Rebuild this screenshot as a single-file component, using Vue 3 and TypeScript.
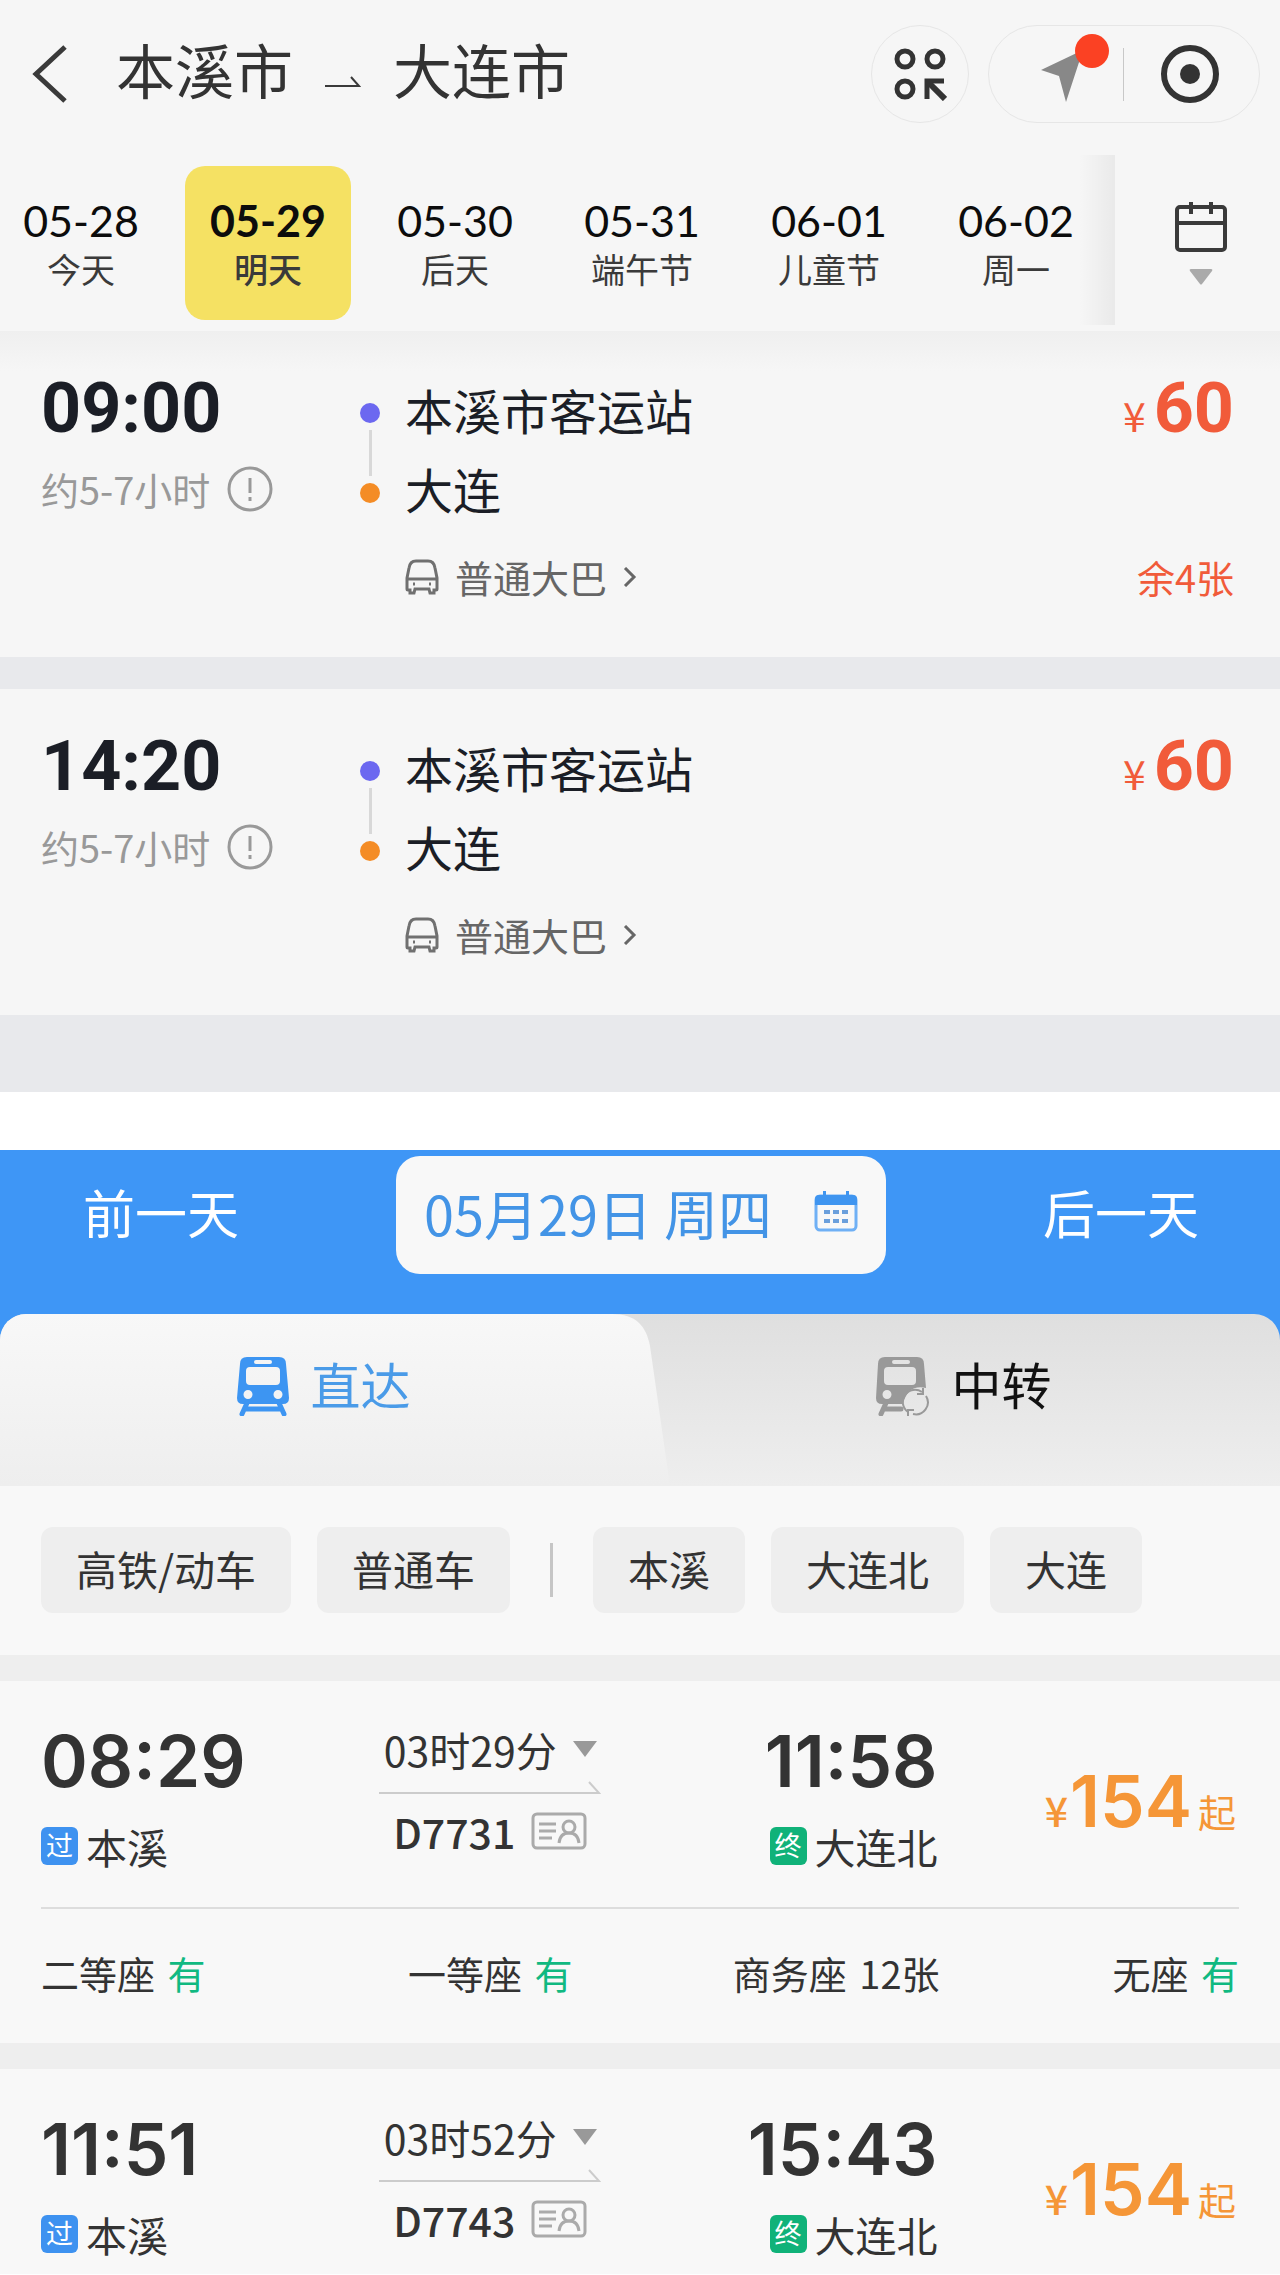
<script setup lang="ts">
import { ref } from 'vue'

interface DateTab { date: string; label: string }
interface Coach { time: string; duration: string; from: string; to: string; type: string; price: number; left?: string }
interface Seat { name: string; stock: string; plenty: boolean }
interface Train { depart: string; arrive: string; from: string; to: string; duration: string; no: string; price: number; seats: Seat[] }

const dates: DateTab[] = [
  { date: '05-28', label: '今天' },
  { date: '05-29', label: '明天' },
  { date: '05-30', label: '后天' },
  { date: '05-31', label: '端午节' },
  { date: '06-01', label: '儿童节' },
  { date: '06-02', label: '周一' },
]
const activeDate = ref('05-29')

const coaches: Coach[] = [
  { time: '09:00', duration: '约5-7小时', from: '本溪市客运站', to: '大连', type: '普通大巴', price: 60, left: '余4张' },
  { time: '14:20', duration: '约5-7小时', from: '本溪市客运站', to: '大连', type: '普通大巴', price: 60 },
]

const typeFilters = ['高铁/动车', '普通车']
const stationFilters = ['本溪', '大连北', '大连']

const trains: Train[] = [
  {
    depart: '08:29', arrive: '11:58', from: '本溪', to: '大连北', duration: '03时29分', no: 'D7731', price: 154,
    seats: [
      { name: '二等座', stock: '有', plenty: true },
      { name: '一等座', stock: '有', plenty: true },
      { name: '商务座', stock: '12张', plenty: false },
      { name: '无座', stock: '有', plenty: true },
    ],
  },
  { depart: '11:51', arrive: '15:43', from: '本溪', to: '大连北', duration: '03时52分', no: 'D7743', price: 154, seats: [] },
]
</script>

<template>
  <div class="page">
    <section class="coach">
      <header class="topbar">
        <button class="back" aria-label="返回">
          <svg width="36" height="60" viewBox="0 0 36 60" fill="none" stroke="#3a3a3a" stroke-width="5"><path d="M33 3 4 30l29 27" /></svg>
        </button>
        <h1 class="route">
          <span>本溪市</span>
          <svg width="36" height="12" viewBox="0 0 36 12" fill="none" stroke="#3a3a3a" stroke-width="2"><path d="M0 10h34L26 1" /></svg>
          <span>大连市</span>
        </h1>
        <button class="round" aria-label="更多服务">
          <svg width="54" height="54" viewBox="0 0 54 54" fill="none" stroke="#333" stroke-width="5">
            <circle cx="12" cy="12" r="8" /><circle cx="42" cy="12" r="8" /><circle cx="12" cy="42" r="8" />
            <path d="M34 52V34h17" /><path d="m36 36 16 16" stroke-width="6" />
          </svg>
        </button>
        <div class="capsule">
          <button class="locate" aria-label="定位">
            <svg width="72" height="72" viewBox="0 0 72 72">
              <path d="M4 37 46 17 29 69 22 43Z" fill="#888" />
              <circle cx="55" cy="18" r="17" fill="#fb4123" />
            </svg>
          </button>
          <i class="bar"></i>
          <button class="close" aria-label="关闭">
            <svg width="60" height="60" viewBox="0 0 60 60"><circle cx="30" cy="30" r="26" fill="none" stroke="#333" stroke-width="6" /><circle cx="30" cy="30" r="10" fill="#333" /></svg>
          </button>
        </div>
      </header>

      <nav class="dates">
        <div class="strip">
          <button v-for="d in dates" :key="d.date" class="day" :class="{ active: d.date === activeDate }" @click="activeDate = d.date">
            <span class="day-date">{{ d.date }}</span>
            <span class="day-label">{{ d.label }}</span>
          </button>
        </div>
        <button class="picker" aria-label="选择日期">
          <svg width="54" height="52" viewBox="0 0 54 52" fill="none" stroke="#3a3a3a" stroke-width="4">
            <rect x="3" y="6" width="48" height="43" rx="3" /><path d="M3 22h48M17 1v12M37 1v12" />
          </svg>
          <svg width="24" height="16" viewBox="0 0 24 16"><path d="M2 0h20q2 0 1 2L13 15q-1 1-2 0L1 2Q0 0 2 0Z" fill="#aaa" /></svg>
        </button>
      </nav>

      <ul class="coach-list">
        <li v-for="c in coaches" :key="c.time" class="coach-row">
          <div class="when">
            <time class="coach-time">{{ c.time }}</time>
            <p class="duration">
              {{ c.duration }}
              <svg width="46" height="46" viewBox="0 0 46 46" fill="none" stroke="#999" stroke-width="3"><circle cx="23" cy="23" r="21" /><path d="M23 12v15M23 31v4" /></svg>
            </p>
          </div>
          <div class="rail"><i class="dot"></i><i class="line"></i><i class="dot end"></i></div>
          <div class="stops">
            <p class="stop">{{ c.from }}</p>
            <p class="stop">{{ c.to }}</p>
            <a class="vehicle" href="#">
              <svg width="34" height="36" viewBox="0 0 34 36" fill="none" stroke="#707070" stroke-width="3">
                <path d="M2 19 4 9Q5 2 11 2h12q6 0 7 7l2 10v11q0 1-1 1h-2v3h-4l-1-4H10l-1 4H5v-3H3q-1 0-1-1ZM2 20h30" />
                <path d="M8 25h2M24 25h2" />
              </svg>
              <span>{{ c.type }}</span>
              <svg width="14" height="20" viewBox="0 0 14 20" fill="none" stroke="#666" stroke-width="3"><path d="m2 1 9 9-9 9" /></svg>
            </a>
          </div>
          <div class="fare">
            <p class="coach-price"><small>¥</small>{{ c.price }}</p>
            <p v-if="c.left" class="left">{{ c.left }}</p>
          </div>
        </li>
      </ul>
    </section>

    <section class="rail-search">
      <div class="blue">
        <nav class="day-nav">
          <button class="shift">前一天</button>
          <button class="current">
            <span>05月29日 周四</span>
            <svg width="44" height="42" viewBox="0 0 44 42">
              <rect x="2" y="5" width="40" height="34" rx="4" fill="none" stroke="#6fb0f5" stroke-width="3" />
              <path d="M1 14V8q0-4 4-4h4V0h3v4h20V0h3v4h4q4 0 4 4v6Z" fill="#3f95f0" />
              <path d="M10 21h24M10 30h24" stroke="#6a9fdc" stroke-width="4" stroke-dasharray="6 3" />
            </svg>
          </button>
          <button class="shift">后一天</button>
        </nav>
        <div class="modes" role="tablist">
          <svg class="mode-shape" viewBox="0 0 670 172" preserveAspectRatio="none" aria-hidden="true">
            <defs><linearGradient id="modeFill" x1="0" y1="0" x2="0" y2="1"><stop offset="0" stop-color="#f8f8f8" /><stop offset="1" stop-color="#eeeeee" /></linearGradient></defs>
            <path d="M0 172V0H612C636 0 646 12 650 32L670 172Z" fill="url(#modeFill)" />
          </svg>
          <button class="mode on" role="tab" aria-selected="true">
            <svg width="52" height="60" viewBox="0 0 52 60" fill="#3d95f2">
              <path fill-rule="evenodd" d="M10 1h32q7 0 7 7l3 34q0 6-6 6H6q-6 0-6-6L3 8q0-7 7-7Zm9 3q-2 0-2 2t2 2h14q2 0 2-2t-2-2Zm-6 7q-4 0-4 4v10q0 4 4 4h26q4 0 4-4V15q0-4-4-4Zm-2 23a4 4 0 1 0 0 9 4 4 0 1 0 0-9Zm30 0a4 4 0 1 0 0 9 4 4 0 1 0 0-9Z" />
              <path d="M10 47 5 58M42 47l5 11M9 53h34" fill="none" stroke="#3d95f2" stroke-width="5" stroke-linecap="round" />
            </svg>
            <span>直达</span>
          </button>
          <button class="mode" role="tab" aria-selected="false">
            <svg width="54" height="60" viewBox="0 0 54 60" fill="#999">
              <path fill-rule="evenodd" d="M9 1h32q7 0 7 7l2 24Q32 28 27 48H6q-6 0-6-6L2 8q0-7 7-7Zm9 3q-2 0-2 2t2 2h14q2 0 2-2t-2-2Zm-6 7q-4 0-4 4v10q0 4 4 4h24q4 0 4-4V15q0-4-4-4Zm-1 23a4 4 0 1 0 0 9 4 4 0 1 0 0-9Z" />
              <path d="M10 47 5 58M10 53h15" fill="none" stroke="#999" stroke-width="5" stroke-linecap="round" />
              <path d="M32 56a12 12 0 0 1 14-20M50 40a12 12 0 0 1-13 18M47 32v6h-6M32 60v-6h6" fill="none" stroke="#999" stroke-width="2" />
            </svg>
            <span>中转</span>
          </button>
        </div>
      </div>

      <div class="filters">
        <button v-for="f in typeFilters" :key="f" class="chip">{{ f }}</button>
        <i class="split"></i>
        <button v-for="f in stationFilters" :key="f" class="chip">{{ f }}</button>
      </div>

      <ul class="train-list">
        <li v-for="t in trains" :key="t.no" class="train">
          <div class="grid">
            <div class="end-point">
              <time class="train-time">{{ t.depart }}</time>
              <p class="station"><b class="tag pass">过</b>{{ t.from }}</p>
            </div>
            <div class="trip">
              <button class="trip-time">
                {{ t.duration }}
                <svg width="24" height="16" viewBox="0 0 24 16"><path d="M0 0h24L12 16Z" fill="#999" /></svg>
              </button>
              <svg class="trip-line" width="222" height="14" viewBox="0 0 222 14" fill="none" stroke="#ccc" stroke-width="2"><path d="M0 12h220L210 1" /></svg>
              <p class="train-no">
                {{ t.no }}
                <svg width="56" height="38" viewBox="0 0 56 38" fill="none" stroke="#aaa" stroke-width="3">
                  <rect x="2" y="2" width="52" height="34" rx="4" /><path d="M8 12h17M8 19h17M8 26h13" />
                  <circle cx="38" cy="15" r="6" /><path d="M28 31q1-10 10-10t10 10" />
                </svg>
              </p>
            </div>
            <div class="end-point right">
              <time class="train-time">{{ t.arrive }}</time>
              <p class="station"><b class="tag last">终</b>{{ t.to }}</p>
            </div>
            <p class="train-price"><small class="yen">¥</small>{{ t.price }}<small>起</small></p>
          </div>
          <ul v-if="t.seats.length" class="seats">
            <li v-for="s in t.seats" :key="s.name">{{ s.name }} <span :class="{ plenty: s.plenty }">{{ s.stock }}</span></li>
          </ul>
        </li>
      </ul>
    </section>
  </div>
</template>

<style>
body { background: #fff; }
</style>

<style scoped>
.page { font-family: "Noto Sans CJK SC", "Noto Sans", sans-serif; color: #333; overflow: hidden; }
h1, p, ul { margin: 0; padding: 0; font-weight: 400; }
ul { list-style: none; }
svg { display: block; flex: none; }
button { border: 0; padding: 0; margin: 0; background: none; font: inherit; color: inherit; cursor: pointer; white-space: nowrap; }
i { display: block; }

.coach { background: #f6f6f6; border-bottom: 77px solid #e8e9ec; margin-bottom: 58px; }
.topbar { display: flex; align-items: center; padding: 25px 20px 32px 32px; }
.route { display: flex; align-items: center; gap: 32px; margin-left: 48px; padding-bottom: 10px; font-size: 59px; line-height: 88px; }
.route svg { margin-top: 26px; }
.round { box-sizing: border-box; width: 98px; height: 98px; margin-left: auto; display: flex; align-items: center; justify-content: center; border: 1px solid #e6e6e6; border-radius: 50%; }
.capsule { box-sizing: border-box; width: 272px; height: 98px; margin-left: 19px; display: flex; align-items: center; border: 1px solid #e6e6e6; border-radius: 49px; padding-left: 48px; }
.locate { padding-bottom: 10px; }
.capsule .bar { width: 1px; height: 53px; margin-left: 14px; background: #c8c8c8; }
.close { margin-left: 36px; }

.dates { display: flex; }
.strip { position: relative; flex: 1; min-width: 0; display: flex; gap: 21px; padding: 11px 0; overflow: hidden; }
.strip::after { content: ""; position: absolute; inset: 0 0 6px auto; width: 36px; background: linear-gradient(to right, rgba(0, 0, 0, 0), rgba(0, 0, 0, 0.05)); }
.day { box-sizing: border-box; flex: none; width: 166px; height: 154px; border-radius: 20px; display: flex; flex-direction: column; align-items: center; padding-top: 30px; }
.day:first-child { margin-left: -2px; }
.day-date { font-family: Lato, "Noto Sans CJK SC", sans-serif; font-size: 43px; line-height: 50px; color: #0c0c0c; }
.day-label { font-size: 34px; line-height: 46px; color: #3a3a3a; }
.day.active { background: #f5e163; }
.day.active .day-date { font-weight: 700; }
.day.active .day-label { font-weight: 500; }
.picker { width: 165px; display: flex; flex-direction: column; align-items: center; gap: 16px; padding: 46px 0 0 7px; box-sizing: border-box; }

.coach-row { display: flex; padding: 40px 46px 55px 41px; color: #1b1e26; background: linear-gradient(#efefef, #f6f6f6 40px); }
.coach-row + .coach-row { border-top: 32px solid #e8e9ec; background: #f6f6f6; }
.when { flex: none; width: 319px; }
.coach-time { display: block; font-family: Roboto, "Noto Sans CJK SC", sans-serif; font-weight: 700; font-size: 70px; line-height: 74px; }
.duration { display: flex; align-items: center; gap: 17px; margin-top: 19px; font-size: 38px; line-height: 50px; color: #999; }
.rail { display: flex; flex-direction: column; align-items: center; gap: 7px; width: 20px; padding-top: 32px; }
.dot { width: 20px; height: 20px; border-radius: 50%; background: #6c68f0; }
.dot.end { background: #f48c25; }
.line { width: 3px; height: 46px; background: #d8d8d8; }
.stops { padding-top: 8px; margin-left: 25px; }
.stop { font-size: 48px; line-height: 60px; margin-bottom: 19px; }
.vehicle { display: flex; align-items: center; gap: 16px; margin-top: 34px; font-size: 38px; line-height: 50px; color: #666; text-decoration: none; }
.fare { margin-left: auto; display: flex; flex-direction: column; justify-content: space-between; align-items: flex-end; color: #f15b3a; }
.coach-price { font-family: Roboto, "Noto Sans CJK SC", sans-serif; font-weight: 700; font-size: 70px; line-height: 74px; }
.coach-price small { font-family: "Noto Sans CJK SC", sans-serif; font-weight: 400; font-size: 41px; line-height: 1; margin-right: 8px; }
.left { font-size: 38px; line-height: 50px; }

.blue { background: #3e96f6; }
.day-nav { display: flex; align-items: center; justify-content: space-between; padding: 6px 81px 40px 83px; }
.shift { font-size: 52px; line-height: 70px; padding-bottom: 6px; color: #fff; }
.current { display: flex; align-items: center; justify-content: space-between; box-sizing: border-box; width: 490px; height: 118px; padding: 0 28px 6px; border-radius: 24px; background: #f8f8f8; font-size: 54px; color: #4394e6; }
.modes { position: relative; display: grid; grid-template-columns: 1fr 1fr; height: 172px; border-radius: 26px 26px 0 0; overflow: hidden; background: linear-gradient(#dfdfdf, #eeeeee); }
.mode-shape { position: absolute; left: 0; top: 0; width: calc(50% + 30px); height: 100%; }
.mode { position: relative; display: flex; align-items: center; justify-content: center; gap: 22px; padding: 0 0 28px 7px; font-size: 50px; color: #111; }
.mode span { padding-bottom: 6px; }
.mode.on { color: #4a9be8; }

.filters { display: flex; align-items: center; gap: 26px; padding: 41px 41px 42px; background: #f8f8f8; }
.chip { height: 86px; padding: 0 35px 4px; border-radius: 12px; background: #eeeeee; font-size: 41px; }
.split { width: 3px; height: 54px; margin: 0 14px; background: #c6c6c6; }

.train { background: #f8f8f8; border-top: 26px solid #eeeeee; padding: 35px 41px 15px; }
.train:has(.seats) { padding-bottom: 45px; }
.grid, .seats { display: grid; grid-template-columns: repeat(4, minmax(0, 1fr)); white-space: nowrap; }
.train-time { display: block; padding-top: 5px; font-family: Inter, "Noto Sans CJK SC", sans-serif; font-weight: 600; font-size: 71px; line-height: 80px; }
.station { display: flex; align-items: center; gap: 8px; margin-top: 20px; font-size: 41px; line-height: 50px; }
.right { display: flex; flex-direction: column; align-items: flex-end; padding-right: 2px; }
.tag { width: 37px; height: 38px; border-radius: 6px; font-weight: 400; font-size: 27px; line-height: 36px; text-align: center; color: #fff; }
.pass { background: #3e92f0; }
.last { background: #10b279; }
.trip { display: flex; flex-direction: column; align-items: center; padding-top: 8px; }
.trip-time { display: flex; align-items: center; gap: 16px; font-size: 41px; line-height: 50px; }
.trip-line { margin: 7px 0 11px; }
.train-no { display: flex; align-items: center; gap: 16px; font-weight: 500; font-size: 41px; line-height: 50px; }
.train-price { padding: 45px 3px 0 0; text-align: right; font-family: Inter, "Noto Sans CJK SC", sans-serif; font-weight: 600; font-size: 71px; line-height: 80px; color: #f59637; }
.train-price small { margin-left: 6px; font-family: "Noto Sans CJK SC", sans-serif; font-weight: 400; font-size: 38px; line-height: 1; }
.train-price .yen { margin: 0 2px 0 0; font-weight: 500; font-size: 41px; }
.seats { margin-top: 36px; padding-top: 39px; border-top: 2px solid #dddddd; font-size: 38px; line-height: 50px; }
.seats li:nth-child(2) { text-align: center; }
.seats li:nth-child(n + 3) { text-align: right; }
.seats span { margin-left: 4px; }
.plenty { color: #10b981; }
</style>
